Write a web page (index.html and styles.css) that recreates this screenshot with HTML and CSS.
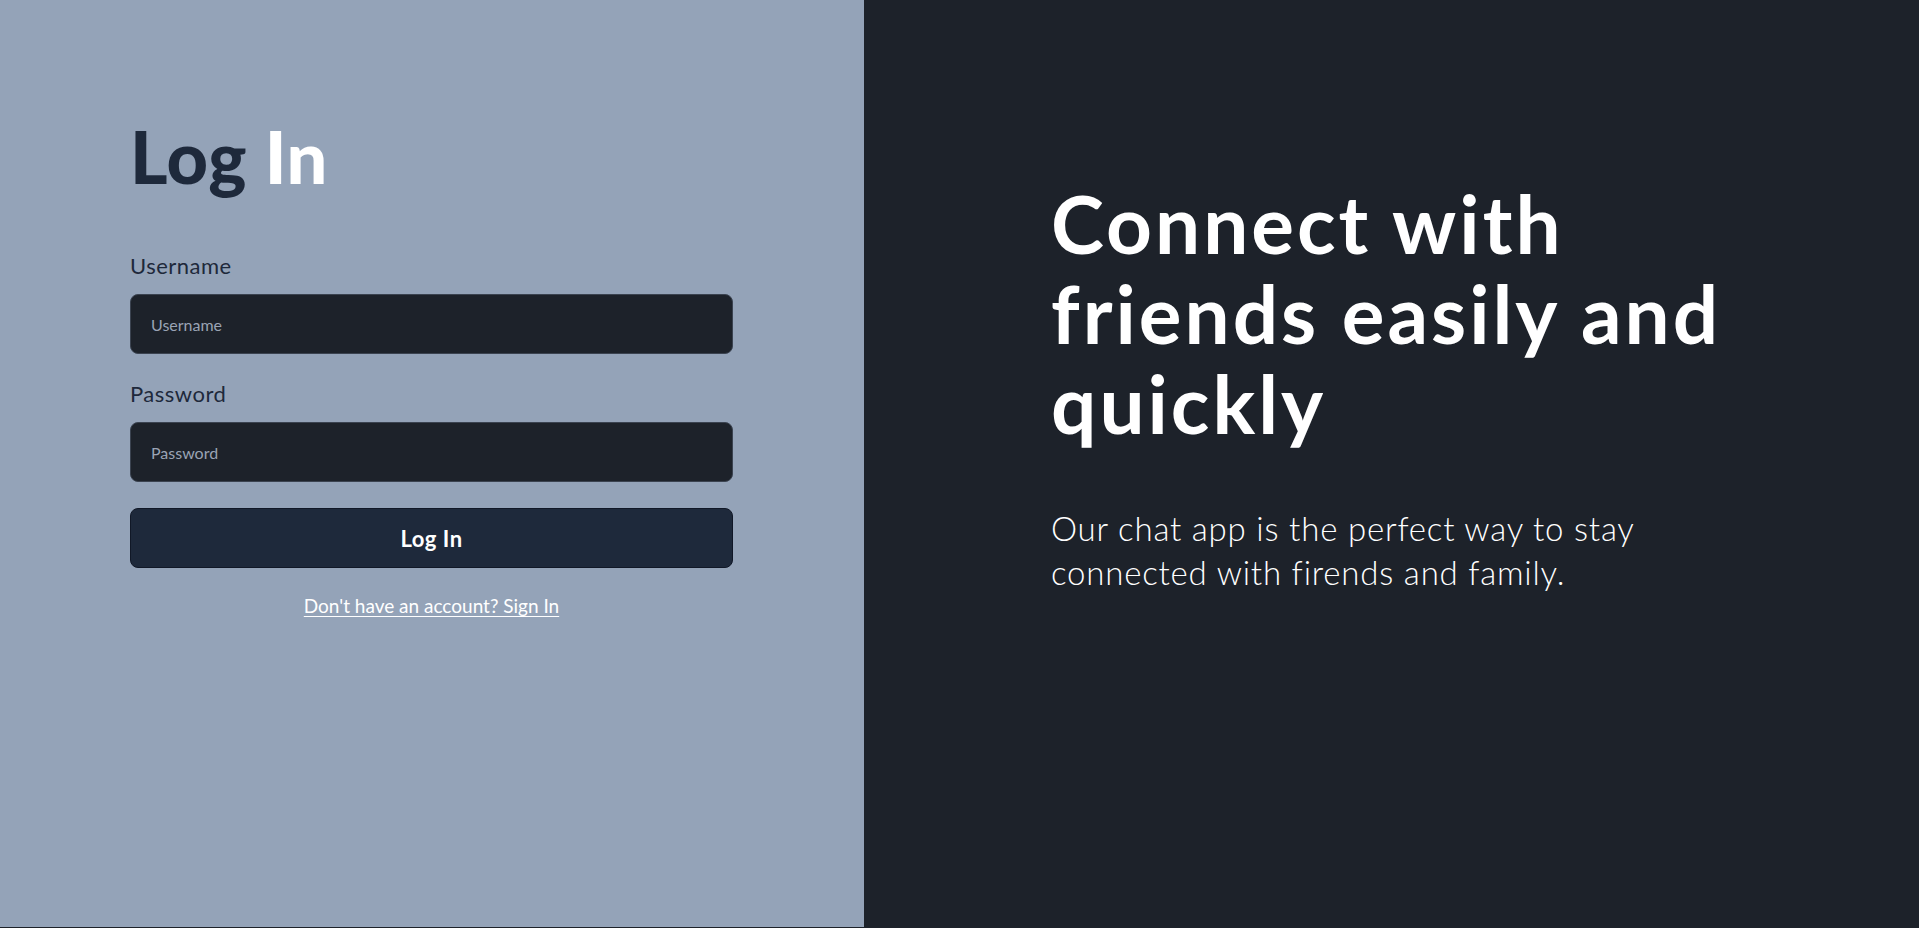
FILE: index.html
```html
<!DOCTYPE html>
<html lang="en">
<head>
<meta charset="utf-8">
<title>Log In</title>
<link rel="stylesheet" href="styles.css">
</head>
<body>
<main class="page">
  <section class="login">
    <h1 class="login-title">Log <span class="accent">In</span></h1>
    <form class="login-form">
      <div class="field">
        <label class="field-label" for="username">Username</label>
        <input class="field-input" id="username" type="text" placeholder="Username">
      </div>
      <div class="field">
        <label class="field-label" for="password">Password</label>
        <input class="field-input" id="password" type="password" placeholder="Password">
      </div>
      <button class="submit" type="button">Log In</button>
      <a class="switch-link" href="#">Don't have an account? Sign In</a>
    </form>
  </section>
  <section class="hero">
    <h2 class="hero-title">Connect with friends easily and quickly</h2>
    <p class="hero-text">Our chat app is the perfect way to stay connected with firends and family.</p>
  </section>
</main>
</body>
</html>
```
FILE: styles.css
```css
* { box-sizing: border-box; }
html, body { margin: 0; padding: 0; }
body {
  background: #1d222a;
  font-family: Lato, "Noto Sans", sans-serif;
}
.page {
  display: grid;
  grid-template-columns: 864px 1fr;
  height: calc(100vh - 1px);
}
.login {
  background: #94a3b8;
  padding: 112px 131px 0 130px;
}
.login-title {
  margin: 0 0 52px;
  font-size: 72px;
  font-weight: 900;
  line-height: 88px;
  color: #1e293b;
  letter-spacing: 0.5px;
}
.accent { color: #ffffff; }
.login-form {
  display: flex;
  flex-direction: column;
  gap: 26px;
}
.field {
  display: flex;
  flex-direction: column;
  gap: 14px;
}
.field-label {
  font-size: 22px;
  color: #1e293b;
  line-height: 28px;
  letter-spacing: 0.5px;
}
.field-input {
  height: 60px;
  background: #1d222a;
  border: 1px solid #3b4350;
  border-radius: 8px;
  padding: 0 20px;
  font-family: inherit;
  font-size: 16px;
  color: #e5e7eb;
}
.field-input::placeholder { color: #9aa4b4; }
.submit {
  height: 60px;
  background: #1e293b;
  border: 1px solid #111827;
  border-radius: 8px;
  color: #ffffff;
  font-family: inherit;
  font-size: 22px;
  font-weight: 700;
  letter-spacing: 0.5px;
}
.switch-link {
  align-self: center;
  color: #ffffff;
  font-size: 19px;
  text-decoration: underline;
  text-underline-offset: 3px;
}
.hero {
  padding: 178px 0 0 187px;
  color: #ffffff;
}
.hero-title {
  margin: 0 0 58px;
  max-width: 700px;
  font-size: 80px;
  font-weight: 700;
  line-height: 90px;
  letter-spacing: 3px;
}
.hero-text {
  margin: 0;
  max-width: 650px;
  font-size: 33px;
  font-weight: 300;
  line-height: 44px;
  letter-spacing: 0.8px;
}
```
